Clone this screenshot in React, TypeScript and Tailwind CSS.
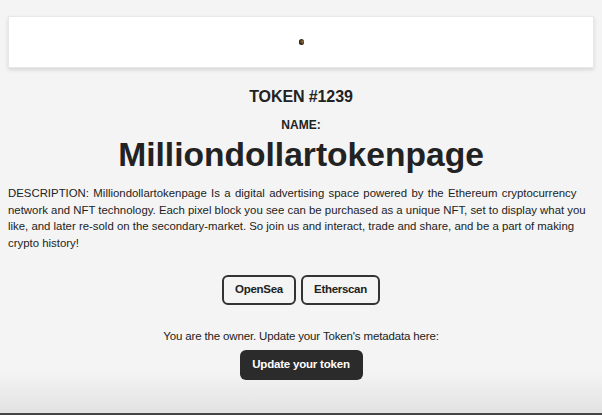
export default function App() {
  return (
    <div className="h-[415px] overflow-hidden bg-[linear-gradient(to_bottom,#f4f4f4_372px,#e2e2e2_413px,#454545_413px)] px-2 pt-4 font-['Liberation_Sans',Arial,sans-serif] text-[#222]">
      <div className="flex h-[52px] items-center justify-center border border-[#e8e8e8] bg-white shadow-[0_2px_4px_rgba(0,0,0,0.12)]">
        <span className="block h-[6px] w-[5px] rounded-full bg-[radial-gradient(circle_at_65%_45%,#9a7440,#1c1208_70%)]" />
      </div>

      <h1 className="mt-[19px] text-center text-[16px] font-bold leading-[20px] tracking-[-0.1px]">TOKEN #1239</h1>
      <h2 className="mt-[10px] text-center text-[12px] font-bold leading-[16px]">NAME:</h2>
      <h2 className="mt-[3px] text-center text-[33.6px] font-bold leading-[38px]">Milliondollartokenpage</h2>

      <p className="mt-[11px] whitespace-nowrap text-[11.4px] leading-[16.7px]">
        <span className="[word-spacing:1.2px]">
          DESCRIPTION: Milliondollartokenpage Is a digital advertising space powered by the Ethereum cryptocurrency
        </span>
        <br />
        network and NFT technology. Each pixel block you see can be purchased as a unique NFT, set to display what you
        <br />
        like, and later re-sold on the secondary-market. So join us and interact, trade and share, and be a part of making
        <br />
        crypto history!
      </p>

      <div className="mt-[23px] flex justify-center gap-[5px]">
        <button className="h-[30px] w-[74px] rounded-[6px] border-2 border-[#333] text-[11.5px] font-bold tracking-[-0.3px]">OpenSea</button>
        <button className="h-[30px] w-[79px] rounded-[6px] border-2 border-[#333] text-[11.5px] font-bold tracking-[-0.3px]">Etherscan</button>
      </div>

      <p className="mt-[23px] text-center text-[11.5px] leading-[16px] tracking-[-0.15px]">
        You are the owner. Update your Token's metadata here:
      </p>
      <div className="mt-[6px] flex justify-center">
        <button className="h-[30px] w-[123px] rounded-[6px] bg-[#2b2b2b] text-[11.5px] font-bold tracking-[-0.2px] text-white">
          Update your token
        </button>
      </div>
    </div>
  );
}
